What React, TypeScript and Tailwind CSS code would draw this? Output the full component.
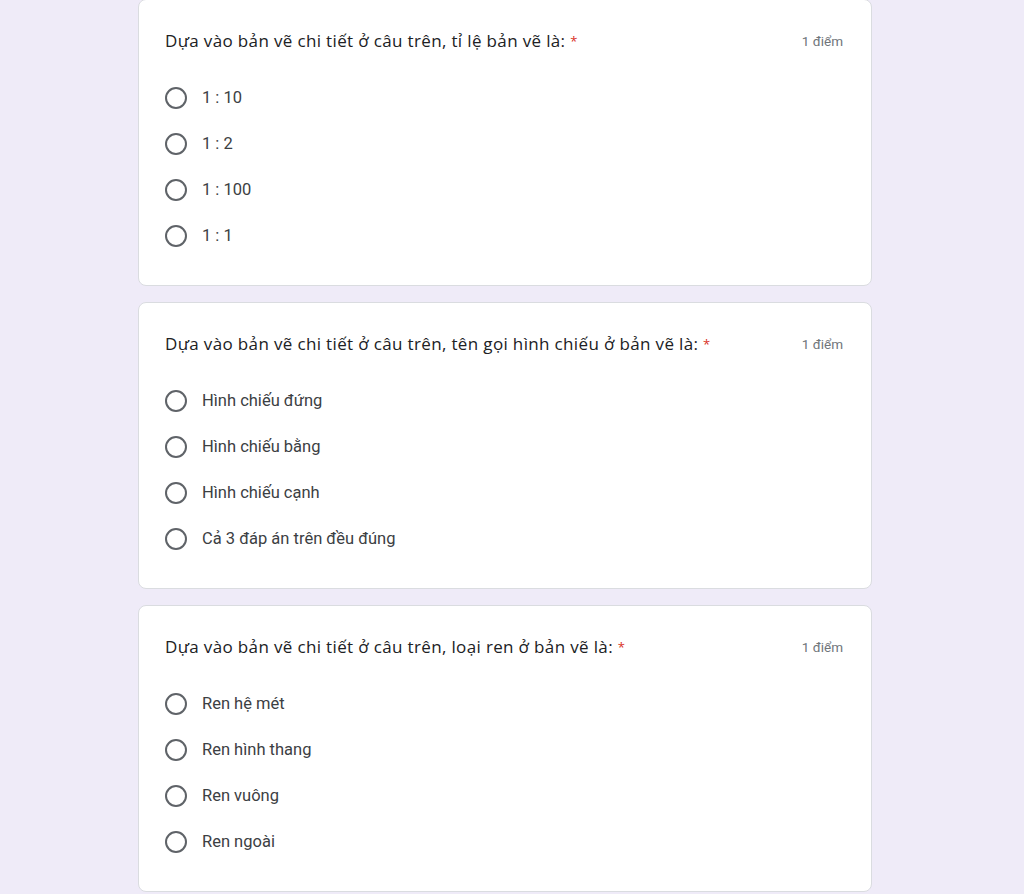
const questions = [
  {
    title: 'Dựa vào bản vẽ chi tiết ở câu trên, tỉ lệ bản vẽ là:',
    options: ['1 : 10', '1 : 2', '1 : 100', '1 : 1'],
  },
  {
    title: 'Dựa vào bản vẽ chi tiết ở câu trên, tên gọi hình chiếu ở bản vẽ là:',
    options: ['Hình chiếu đứng', 'Hình chiếu bằng', 'Hình chiếu cạnh', 'Cả 3 đáp án trên đều đúng'],
  },
  {
    title: 'Dựa vào bản vẽ chi tiết ở câu trên, loại ren ở bản vẽ là:',
    options: ['Ren hệ mét', 'Ren hình thang', 'Ren vuông', 'Ren ngoài'],
  },
];

export default function App() {
  return (
    <div className="min-h-[894px] bg-[#efebf8] overflow-hidden font-['Roboto',sans-serif]">
      <div className="w-[734px] ml-[138px] -mt-px flex flex-col gap-4">
        {questions.map((q) => (
          <div
            key={q.title}
            className="bg-white border border-[#dadce0] rounded-lg px-[26px] pt-[29px] pb-[26px]"
          >
            <div className="flex items-start justify-between h-6">
              <div className="font-['Open_Sans',sans-serif] text-[17px] leading-6 tracking-[0.35px] text-[#202124]">
                {q.title}{' '}
                <span className="text-[#d93025] text-[13px] align-top">*</span>
              </div>
              <div className="text-[13.5px] leading-6 text-[#70757a] pr-[2px]">1 điểm</div>
            </div>
            <div className="mt-[22px] flex flex-col">
              {q.options.map((o) => (
                <label key={o} className="h-[46px] flex items-center gap-[15px] cursor-pointer">
                  <span className="w-[22px] h-[22px] rounded-full border-2 border-[#5f6368] shrink-0" />
                  <span className="text-[16.5px] text-[#3c4043]">{o}</span>
                </label>
              ))}
            </div>
          </div>
        ))}
      </div>
    </div>
  );
}
